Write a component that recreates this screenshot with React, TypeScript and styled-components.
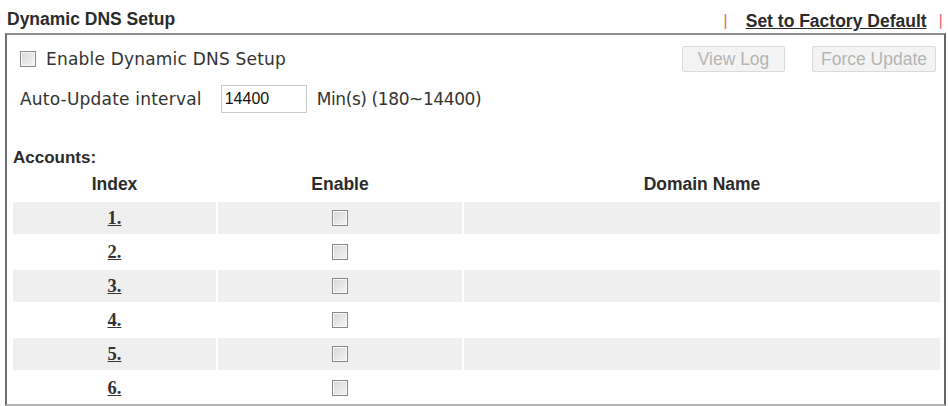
import styled, { createGlobalStyle } from "styled-components";

const GlobalStyle = createGlobalStyle`
  html, body {
    margin: 0;
    padding: 0;
    background: #ffffff;
  }
  body {
    font-family: "DejaVu Sans", Verdana, sans-serif;
    color: #333;
  }
`;

const accounts = [1, 2, 3, 4, 5, 6];

export default function App() {
  return (
    <>
      <GlobalStyle />
      <Page>
        <TitleBar>
          <Title>Dynamic DNS Setup</Title>
          <TitleLinks>
            <Sep>|</Sep>
            <FactoryLink href="#">Set to Factory Default</FactoryLink>
            <Sep>|</Sep>
          </TitleLinks>
        </TitleBar>

        <Panel>
          <TopRow>
            <CheckLabel>
              <Box />
              Enable Dynamic DNS Setup
            </CheckLabel>
            <Buttons>
              <GrayButton disabled $width={103}>View Log</GrayButton>
              <GrayButton disabled $width={124}>Force Update</GrayButton>
            </Buttons>
          </TopRow>

          <IntervalRow>
            <Label>Auto-Update interval</Label>
            <Interval defaultValue="14400" />
            <Label $tight>Min(s) (180~14400)</Label>
          </IntervalRow>

          <Accounts>Accounts:</Accounts>

          <Table>
            <Row>
              <HeadCell>Index</HeadCell>
              <HeadCell>Enable</HeadCell>
              <HeadCell>Domain Name</HeadCell>
            </Row>
            {accounts.map((n) => (
              <Row key={n}>
                <Cell $shaded={n % 2 === 1}>
                  <IndexLink href="#">{n}.</IndexLink>
                </Cell>
                <Cell $shaded={n % 2 === 1}>
                  <Box />
                </Cell>
                <Cell $shaded={n % 2 === 1} />
              </Row>
            ))}
          </Table>
        </Panel>
      </Page>
    </>
  );
}

const Page = styled.div`
  width: 948px;
  height: 406px;
  overflow: hidden;
`;

const TitleBar = styled.div`
  display: flex;
  justify-content: space-between;
  align-items: flex-start;
  height: 33px;
  box-sizing: border-box;
  padding: 9px 5px 0 7px;
`;

const Title = styled.div`
  font-family: "Liberation Sans", Arial, sans-serif;
  font-weight: bold;
  font-size: 17.5px;
  line-height: 20px;
  color: #2b2b2b;
`;

const TitleLinks = styled.div`
  display: flex;
  align-items: flex-start;
  line-height: 20px;
`;

const Sep = styled.span`
  font-family: "Liberation Sans", Arial, sans-serif;
  font-size: 17px;
  color: #e07070;
  margin-top: 2px;
`;

const FactoryLink = styled.a`
  font-family: "Liberation Sans", Arial, sans-serif;
  font-weight: bold;
  font-size: 17.5px;
  color: #2b2b2b;
  text-decoration: underline;
  margin: 2px 12px 0 18px;
`;

const Panel = styled.div`
  margin: 0 2px 0 5px;
  height: 373px;
  box-sizing: border-box;
  border-top: 2px solid #8f8f8f;
  border-left: 2px solid #6e6e6e;
  border-right: 2px solid #666;
  border-bottom: 2px solid #b4b4b4;
  overflow: hidden;
`;

const TopRow = styled.div`
  display: flex;
  justify-content: space-between;
  align-items: center;
  height: 26px;
  padding: 11px 8px 0 13px;
`;

const CheckLabel = styled.label`
  display: flex;
  align-items: center;
  gap: 10px;
  font-size: 17px;
  letter-spacing: 0.2px;
  color: #333;
`;

const Box = styled.span`
  display: inline-block;
  width: 14px;
  height: 14px;
  border: 1px solid #85898c;
  box-shadow: inset 0 0 0 1px #f8f8f8;
  background: linear-gradient(135deg, #d6d6d6 0%, #f6f6f6 100%);
`;

const Buttons = styled.div`
  display: flex;
  gap: 27px;
`;

const GrayButton = styled.button<{ $width: number }>`
  width: ${(p) => p.$width}px;
  height: 26px;
  padding: 0;
  border: 1px solid #dadada;
  border-radius: 2px;
  background: #f3f3f3;
  font-family: "Liberation Sans", Arial, sans-serif;
  font-size: 17.5px;
  color: #b5b5b5;
`;

const IntervalRow = styled.div`
  display: flex;
  align-items: center;
  margin-top: 13px;
  padding-left: 13px;
  height: 28px;
`;

const Label = styled.span<{ $tight?: boolean }>`
  font-size: 17px;
  letter-spacing: ${(p) => (p.$tight ? "-0.4px" : "0.2px")};
  color: #333;
`;

const Interval = styled.input`
  width: 86px;
  height: 28px;
  box-sizing: border-box;
  margin: 0 10px 0 19px;
  padding: 0 3px;
  border: 1px solid #c9c9c9;
  font-family: "Liberation Sans", Arial, sans-serif;
  font-size: 16px;
  color: #111;
  outline: none;
`;

const Accounts = styled.div`
  margin-top: 34px;
  padding-left: 6px;
  font-family: "Liberation Sans", Arial, sans-serif;
  font-weight: bold;
  font-size: 17px;
  line-height: 22px;
  color: #2b2b2b;
`;

const Table = styled.div`
  display: flex;
  flex-direction: column;
  gap: 2px;
  padding: 0 4px 0 6px;
`;

const Row = styled.div`
  display: grid;
  grid-template-columns: 203px 244px 1fr;
  column-gap: 2px;
  height: 32px;
  &:first-child {
    height: 31px;
  }
`;

const HeadCell = styled.div`
  display: flex;
  align-items: center;
  justify-content: center;
  font-family: "Liberation Sans", Arial, sans-serif;
  font-weight: bold;
  font-size: 17.5px;
  color: #2b2b2b;
`;

const Cell = styled.div<{ $shaded: boolean }>`
  display: flex;
  align-items: center;
  justify-content: center;
  background: ${(p) => (p.$shaded ? "#efefef" : "#ffffff")};
`;

const IndexLink = styled.a`
  font-family: "Liberation Serif", "Times New Roman", serif;
  font-weight: bold;
  font-size: 18.5px;
  color: #333;
  text-decoration: underline;
`;
